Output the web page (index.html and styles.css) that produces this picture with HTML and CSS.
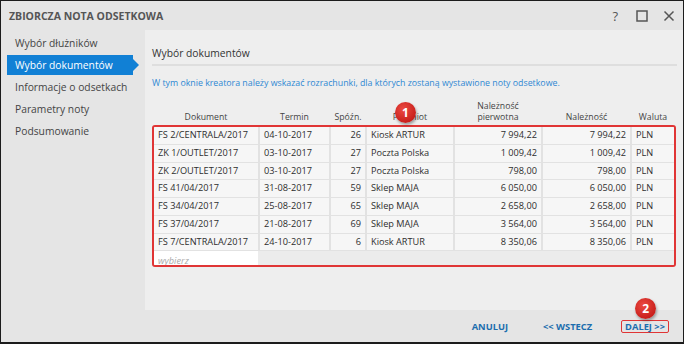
FILE: index.html
```html
<!DOCTYPE html>
<html lang="pl">
<head>
<meta charset="utf-8">
<title>Zbiorcza nota odsetkowa</title>
<link rel="stylesheet" href="styles.css">
</head>
<body>
<div class="window">
  <header class="titlebar">
    <span class="title">ZBIORCZA NOTA ODSETKOWA</span>
    <div class="win-btns">
      <span class="win-help">?</span>
      <svg class="win-icon" width="12" height="12" viewBox="0 0 12 12"><rect x="1" y="1" width="10" height="10" fill="none" stroke="#555" stroke-width="1.5"/></svg>
      <svg class="win-icon" width="12" height="12" viewBox="0 0 12 12"><path d="M1.5 1.5 L10.5 10.5 M10.5 1.5 L1.5 10.5" stroke="#555" stroke-width="1.5" fill="none"/></svg>
    </div>
  </header>
  <div class="main">
    <nav class="sidebar">
      <div class="nav-item">Wybór dłużników</div>
      <div class="nav-item active">Wybór dokumentów</div>
      <div class="nav-item">Informacje o odsetkach</div>
      <div class="nav-item">Parametry noty</div>
      <div class="nav-item">Podsumowanie</div>
    </nav>
    <section class="content">
      <h2 class="section-title">Wybór dokumentów</h2>
      <p class="hint">W tym oknie kreatora należy wskazać rozrachunki, dla których zostaną wystawione noty odsetkowe.</p>
      <div class="grid-wrap">
        <div class="thead">
          <div>Dokument</div>
          <div>Termin</div>
          <div>Spóźn.</div>
          <div>Podmiot</div>
          <div>Należność<br>pierwotna</div>
          <div>Należność</div>
          <div>Waluta</div>
        </div>
        <div class="tbody">
          <div class="c">FS 2/CENTRALA/2017</div><div class="c">04-10-2017</div><div class="c r">26</div><div class="c">Kiosk ARTUR</div><div class="c r">7 994,22</div><div class="c r">7 994,22</div><div class="c">PLN</div>
          <div class="c">ZK 1/OUTLET/2017</div><div class="c">03-10-2017</div><div class="c r">27</div><div class="c">Poczta Polska</div><div class="c r">1 009,42</div><div class="c r">1 009,42</div><div class="c">PLN</div>
          <div class="c">ZK 2/OUTLET/2017</div><div class="c">03-10-2017</div><div class="c r">27</div><div class="c">Poczta Polska</div><div class="c r">798,00</div><div class="c r">798,00</div><div class="c">PLN</div>
          <div class="c">FS 41/04/2017</div><div class="c">31-08-2017</div><div class="c r">59</div><div class="c">Sklep MAJA</div><div class="c r">6 050,00</div><div class="c r">6 050,00</div><div class="c">PLN</div>
          <div class="c">FS 34/04/2017</div><div class="c">25-08-2017</div><div class="c r">65</div><div class="c">Sklep MAJA</div><div class="c r">2 658,00</div><div class="c r">2 658,00</div><div class="c">PLN</div>
          <div class="c">FS 37/04/2017</div><div class="c">21-08-2017</div><div class="c r">69</div><div class="c">Sklep MAJA</div><div class="c r">3 564,00</div><div class="c r">3 564,00</div><div class="c">PLN</div>
          <div class="c">FS 7/CENTRALA/2017</div><div class="c">24-10-2017</div><div class="c r">6</div><div class="c">Kiosk ARTUR</div><div class="c r">8 350,06</div><div class="c r">8 350,06</div><div class="c">PLN</div>
          <div class="c pick">wybierz</div><div class="c rest"></div>
        </div>
        <span class="badge badge-1">1</span>
      </div>
    </section>
  </div>
  <footer class="footer">
    <span class="btn btn-cancel">ANULUJ</span>
    <span class="btn btn-back">&lt;&lt; WSTECZ</span>
    <span class="btn btn-next">DALEJ &gt;&gt;<span class="badge badge-2">2</span></span>
  </footer>
</div>
</body>
</html>
```
FILE: styles.css
```css
* { box-sizing: border-box; }
html, body { margin: 0; padding: 0; }
body {
  width: 684px;
  height: 344px;
  font-family: "Open Sans", "Noto Sans", sans-serif;
  color: #333;
  overflow: hidden;
}
.window {
  width: 684px;
  height: 344px;
  border: 1px solid #1c1c1c;
  border-bottom-width: 2px;
  background: #e5e5e5;
  display: flex;
  flex-direction: column;
}
.titlebar {
  height: 29px;
  flex: none;
  display: flex;
  align-items: center;
  justify-content: space-between;
  padding: 0 8px 0 8px;
}
.title {
  font-size: 10.5px;
  font-weight: 700;
  color: #555;
}
.win-btns {
  display: flex;
  align-items: center;
  gap: 15px;
}
.win-help {
  font-size: 13px;
  color: #555;
  line-height: 12px;
  margin-right: 3px;
}
.win-icon { display: block; }
.main {
  height: 280px;
  flex: none;
  display: flex;
}
.sidebar {
  width: 144px;
  flex: none;
  padding-top: 2px;
}
.nav-item {
  height: 22px;
  line-height: 22px;
  font-size: 10.3px;
  color: #444;
  padding-left: 14px;
  white-space: nowrap;
}
.nav-item.active {
  position: relative;
  margin: 1px 0 1px 6px;
  width: 126px;
  height: 20px;
  line-height: 20px;
  padding-left: 8px;
  background: #1180d5;
  color: #fff;
}
.nav-item.active::after {
  content: "";
  position: absolute;
  right: -6px;
  top: 4px;
  border-left: 6px solid #1180d5;
  border-top: 6px solid transparent;
  border-bottom: 6px solid transparent;
}
.content {
  flex: 1;
  background: #eeeeee;
  padding: 15px 6px 0 7px;
}
.section-title {
  margin: 0;
  font-size: 10.3px;
  font-weight: 400;
  color: #333;
  line-height: 16px;
  padding-bottom: 3px;
  border-bottom: 2px solid #dedede;
}
.hint {
  margin: 10px 0 0 0;
  font-size: 8.8px;
  line-height: 14px;
  color: #2f88d3;
  white-space: nowrap;
}
.grid-wrap {
  position: relative;
  margin-top: 11px;
  width: 524px;
}
.thead, .tbody {
  display: grid;
  grid-template-columns: 104px 69px 34px 86px 86px 87px 42px;
  column-gap: 2px;
}
.thead {
  height: 22px;
  margin: 0 2px 2px 2px;
  align-items: end;
  font-size: 8.7px;
  line-height: 11px;
  color: #444;
  text-align: center;
}
.tbody {
  border: 2px solid #e03535;
  border-radius: 3px;
  height: 142px;
  overflow: hidden;
  background: #e2e2e2;
  grid-auto-rows: 16.75px;
  row-gap: 1px;
  align-content: start;
}
.c {
  background: #f6f6f6;
  font-size: 9.2px;
  line-height: 16.75px;
  padding: 0 4px;
  color: #2e2e2e;
  white-space: nowrap;
  overflow: hidden;
}
.c.r { text-align: right; }
.c.pick {
  background: #fff;
  color: #aaa;
  font-style: italic;
  height: 19px;
  line-height: 19px;
}
.c.rest {
  grid-column: span 6;
  background: #ececec;
  margin-left: -2px;
  height: 19px;
}
.badge {
  position: absolute;
  width: 21px;
  height: 21px;
  border-radius: 50%;
  background: radial-gradient(circle at 40% 35%, #ec4a42, #c9201c 70%);
  color: #fff;
  font-size: 12px;
  font-weight: 700;
  line-height: 21px;
  text-align: center;
  box-shadow: 1px 2px 3px rgba(0,0,0,0.35);
  font-style: normal;
}
.badge-1 {
  left: 243px;
  top: 1px;
}
.footer {
  height: 32px;
  flex: none;
  display: flex;
  align-items: center;
  justify-content: flex-end;
  padding-right: 14px;
  padding-top: 1px;
}
.btn {
  font-size: 9.3px;
  font-weight: 700;
  color: #1c6eae;
  line-height: 11px;
}
.btn-cancel { margin-right: 35px; }
.btn-back { margin-right: 29px; }
.btn-next {
  position: relative;
  border: 1.5px solid #e03535;
  border-radius: 2px;
  padding: 0 3px;
}
.badge-2 {
  left: 13px;
  top: -23px;
}
```
